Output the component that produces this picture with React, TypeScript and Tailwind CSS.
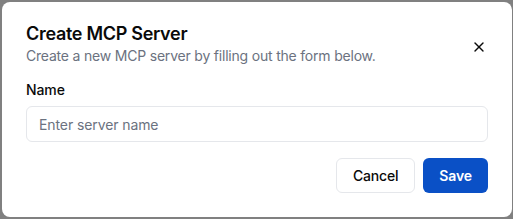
import React from "react";

export default function App() {
  return (
    <div
      className="w-[513px] h-[219px] bg-[#808080] pl-[2px] pt-[2px]"
      style={{ fontFamily: "Inter, 'Noto Sans', sans-serif" }}
    >
      <div className="w-[510px] h-[215px] bg-white rounded-lg px-6 pt-[23px] pb-6 flex flex-col">
        <div className="flex items-center justify-between">
          <div className="flex flex-col">
            <h2 className="text-lg leading-none font-semibold text-[#0a0a0a] tracking-[-0.3px]">
              Create MCP Server
            </h2>
            <p className="mt-[3px] text-sm leading-5 text-[#6b7280] tracking-[-0.2px]">
              Create a new MCP server by filling out the form below.
            </p>
          </div>
          <button className="w-4 h-4 flex items-center justify-center text-[#0a0a0a] mt-[2px] mr-[1px]">
            <svg
              width="16"
              height="16"
              viewBox="0 0 24 24"
              fill="none"
              stroke="currentColor"
              strokeWidth="2"
              strokeLinecap="round"
              strokeLinejoin="round"
            >
              <path d="M18 6 6 18" />
              <path d="m6 6 12 12" />
            </svg>
          </button>
        </div>
        <label className="mt-[14px] text-sm leading-5 font-medium text-[#0a0a0a] tracking-[-0.1px]">
          Name
        </label>
        <input
          className="mt-1.5 h-9 w-full rounded-md border border-[#e5e7eb] px-3 text-sm text-[#0a0a0a] placeholder:text-[#6b7280] outline-none tracking-[-0.1px]"
          placeholder="Enter server name"
        />
        <div className="mt-4 flex justify-end gap-2">
          <button className="h-[35px] px-4 rounded-md border border-[#e5e7eb] bg-white text-sm font-medium text-[#0a0a0a] tracking-[-0.2px]">
            Cancel
          </button>
          <button className="h-[35px] px-4 rounded-md bg-[#0a50c6] text-sm font-semibold text-white tracking-[-0.1px]">
            Save
          </button>
        </div>
      </div>
    </div>
  );
}
